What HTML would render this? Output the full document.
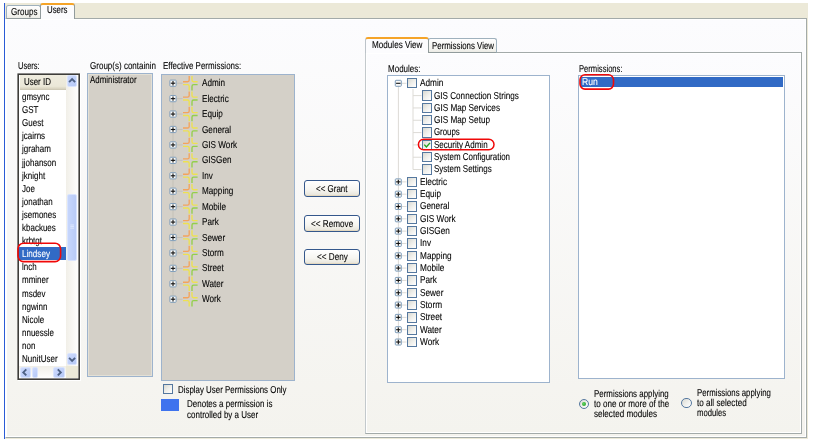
<!DOCTYPE html>
<html><head><meta charset="utf-8"><title>Users</title>
<style>
html,body{margin:0;padding:0;background:#fff;}
body{width:814px;height:440px;overflow:hidden;position:relative;font-family:"Liberation Sans",sans-serif;font-size:10px;line-height:12px;color:#000;}
.a{position:absolute;box-sizing:border-box;}
.t{-webkit-text-stroke:0.1px currentColor;position:absolute;white-space:nowrap;transform-origin:0 0;display:block;line-height:12px;}
#tx{position:absolute;left:0;top:0;width:814px;height:440px;will-change:transform;}
.pane{border:1.3px solid #a3aaa9;border-left-color:#fff;background:linear-gradient(#fcfcfe 0,#f4f3ee 100%);box-shadow:inset 0 0 0 1px #fff;}
.tab{border:1px solid #9fb1bd;border-bottom-color:#919b9c;border-radius:2.5px 2.5px 0 0;background:linear-gradient(#fefefe,#f3f3ee 80%,#ecebe5);}
.tabsel{border:1px solid #919b9c;border-top:2.2px solid #f5a428;border-bottom:none;border-radius:3px 3px 0 0;background:#fcfcfe;}
.lb{border:1.4px solid #9db3cd;}
.sbtn{border:1px solid #d9e4fe;border-radius:2px;background:linear-gradient(135deg,#cddafd,#b5c8f6);}
.cb{border:1px solid #55789f;background:linear-gradient(135deg,#d9d9d2 0,#efefeb 50%,#fff 100%);}
.rd{border:1px solid #55789f;border-radius:50%;background:linear-gradient(135deg,#d9d9d2 0,#efefeb 50%,#fff 100%);}
.btn{border:1.4px solid #35588c;border-radius:3px;background:linear-gradient(#fff 0,#f6f5f0 60%,#e6e3d8 100%);box-shadow:inset 0 -1px 0 #e3d8c0;}
svg{position:absolute;left:0;top:0;}
</style></head>
<body>
<div class="a" style="left:4.00px;top:3.00px;width:1.20px;height:435.60px;background:#2a5bd6;"></div>
<div class="a" style="left:5.20px;top:3.00px;width:802.80px;height:436.00px;background:#ece9d8;"></div>
<div class="a pane" style="left:5.20px;top:18.20px;width:802.20px;height:419.50px;"></div>
<div class="a tab" style="left:6.30px;top:4.80px;width:34.70px;height:13.80px;"></div>
<div class="a tabsel" style="left:40.40px;top:3.00px;width:34.80px;height:16.40px;"></div>
<div class="a" style="left:18.00px;top:74.00px;width:63.00px;height:307.00px;background:#fff;"></div>
<div class="a" style="left:19.60px;top:75.00px;width:46.00px;height:14.60px;background:linear-gradient(#efecdf 0,#ebe8d8 75%,#d8d3c0 92%,#c8c4b0 100%);"></div>
<div class="a" style="left:65.80px;top:75.00px;width:12.20px;height:291.40px;background:linear-gradient(90deg,#f1efe8,#fefefd);"></div>
<div class="a sbtn" style="left:66.90px;top:75.20px;width:10.30px;height:11.40px;"></div>
<div class="a sbtn" style="left:67.00px;top:193.60px;width:10.30px;height:67.00px;background:linear-gradient(90deg,#c6d6fc,#b9cbf6);"></div>
<div class="a sbtn" style="left:66.80px;top:353.40px;width:10.60px;height:11.40px;"></div>
<div class="a" style="left:19.30px;top:366.40px;width:46.30px;height:11.80px;background:linear-gradient(#f1efe8,#fefefd);"></div>
<div class="a sbtn" style="left:19.60px;top:366.80px;width:11.00px;height:11.00px;"></div>
<div class="a sbtn" style="left:32.40px;top:366.80px;width:5.20px;height:11.00px;"></div>
<div class="a sbtn" style="left:53.40px;top:366.80px;width:11.40px;height:11.00px;"></div>
<div class="a" style="left:65.60px;top:366.40px;width:12.40px;height:11.80px;background:#ece9d8;"></div>
<div class="a" style="left:19.30px;top:247.00px;width:46.30px;height:13.00px;background:#316ac5;"></div>
<div class="a lb" style="left:86.80px;top:73.40px;width:66.40px;height:303.80px;background:#d4d0c8;box-shadow:inset 0 0 0 1px #e3e0d6;"></div>
<div class="a lb" style="left:160.80px;top:73.80px;width:134.40px;height:307.20px;background:#d4d0c8;"></div>
<div class="a cb" style="left:163.00px;top:384.00px;width:10.40px;height:10.40px;"></div>
<div class="a" style="left:161.00px;top:399.00px;width:18.30px;height:12.00px;background:#3f73ee;"></div>
<div class="a btn" style="left:304.00px;top:180.00px;width:56.10px;height:16.60px;"></div>
<div class="a btn" style="left:304.00px;top:215.40px;width:56.10px;height:16.20px;"></div>
<div class="a btn" style="left:304.00px;top:248.60px;width:56.10px;height:16.20px;"></div>
<div class="a pane" style="left:365.30px;top:51.80px;width:436.30px;height:382.70px;border-left:1.6px solid #c3c9cc;"></div>
<div class="a tab" style="left:428.20px;top:38.40px;width:69.00px;height:14.20px;"></div>
<div class="a tabsel" style="left:365.30px;top:36.60px;width:63.50px;height:16.80px;border-left:1.5px solid #bcc3c9;"></div>
<div class="a lb" style="left:386.80px;top:75.20px;width:163.00px;height:308.20px;background:#fff;"></div>
<div class="a cb" style="left:407.00px;top:78.10px;width:10.40px;height:10.40px;"></div>
<div class="a cb" style="left:422.00px;top:90.42px;width:10.40px;height:10.40px;"></div>
<div class="a cb" style="left:422.00px;top:102.74px;width:10.40px;height:10.40px;"></div>
<div class="a cb" style="left:422.00px;top:115.06px;width:10.40px;height:10.40px;"></div>
<div class="a cb" style="left:422.00px;top:127.38px;width:10.40px;height:10.40px;"></div>
<div class="a cb" style="left:422.00px;top:139.70px;width:10.40px;height:10.40px;"></div>
<div class="a cb" style="left:422.00px;top:152.02px;width:10.40px;height:10.40px;"></div>
<div class="a cb" style="left:422.00px;top:164.34px;width:10.40px;height:10.40px;"></div>
<div class="a cb" style="left:407.00px;top:176.66px;width:10.40px;height:10.40px;"></div>
<div class="a cb" style="left:407.00px;top:188.98px;width:10.40px;height:10.40px;"></div>
<div class="a cb" style="left:407.00px;top:201.30px;width:10.40px;height:10.40px;"></div>
<div class="a cb" style="left:407.00px;top:213.62px;width:10.40px;height:10.40px;"></div>
<div class="a cb" style="left:407.00px;top:225.94px;width:10.40px;height:10.40px;"></div>
<div class="a cb" style="left:407.00px;top:238.26px;width:10.40px;height:10.40px;"></div>
<div class="a cb" style="left:407.00px;top:250.58px;width:10.40px;height:10.40px;"></div>
<div class="a cb" style="left:407.00px;top:262.90px;width:10.40px;height:10.40px;"></div>
<div class="a cb" style="left:407.00px;top:275.22px;width:10.40px;height:10.40px;"></div>
<div class="a cb" style="left:407.00px;top:287.54px;width:10.40px;height:10.40px;"></div>
<div class="a cb" style="left:407.00px;top:299.86px;width:10.40px;height:10.40px;"></div>
<div class="a cb" style="left:407.00px;top:312.18px;width:10.40px;height:10.40px;"></div>
<div class="a cb" style="left:407.00px;top:324.50px;width:10.40px;height:10.40px;"></div>
<div class="a cb" style="left:407.00px;top:336.82px;width:10.40px;height:10.40px;"></div>
<div class="a lb" style="left:578.40px;top:75.20px;width:206.80px;height:303.40px;background:#fff;"></div>
<div class="a" style="left:580.40px;top:77.00px;width:202.80px;height:9.80px;background:#316ac5;"></div>
<div class="a rd" style="left:578.60px;top:398.80px;width:10.40px;height:10.40px;"></div>
<div class="a" style="left:581.70px;top:401.90px;width:4.20px;height:4.20px;border-radius:50%;background:radial-gradient(circle at 40% 40%,#5fd25f,#1f9a1f);"></div>
<div class="a rd" style="left:681.20px;top:397.80px;width:10.40px;height:10.40px;"></div>
<div id="tx">
<span class="t" style="left:11.00px;top:6.10px;transform:scaleX(0.8079) skewX(.05deg);">Groups</span>
<span class="t" style="left:46.50px;top:4.30px;transform:scaleX(0.7854) skewX(.05deg);">Users</span>
<span class="t" style="left:18.30px;top:59.50px;transform:scaleX(0.7509) skewX(.05deg);">Users:</span>
<span class="t" style="left:24.10px;top:75.90px;transform:scaleX(0.7935) skewX(.05deg);">User ID</span>
<span class="t" style="left:22.00px;top:91.00px;transform:scaleX(0.8000) skewX(.05deg);">gmsync</span>
<span class="t" style="left:22.00px;top:104.10px;transform:scaleX(0.8000) skewX(.05deg);">GST</span>
<span class="t" style="left:22.00px;top:117.20px;transform:scaleX(0.8000) skewX(.05deg);">Guest</span>
<span class="t" style="left:22.20px;top:130.30px;transform:scaleX(0.8000) skewX(.05deg);">jcairns</span>
<span class="t" style="left:22.20px;top:143.40px;transform:scaleX(0.8000) skewX(.05deg);">jgraham</span>
<span class="t" style="left:22.20px;top:156.50px;transform:scaleX(0.8000) skewX(.05deg);">jjohanson</span>
<span class="t" style="left:22.20px;top:169.60px;transform:scaleX(0.8000) skewX(.05deg);">jknight</span>
<span class="t" style="left:22.00px;top:182.70px;transform:scaleX(0.8000) skewX(.05deg);">Joe</span>
<span class="t" style="left:22.20px;top:195.80px;transform:scaleX(0.8000) skewX(.05deg);">jonathan</span>
<span class="t" style="left:22.20px;top:208.90px;transform:scaleX(0.8000) skewX(.05deg);">jsemones</span>
<span class="t" style="left:22.00px;top:222.00px;transform:scaleX(0.8000) skewX(.05deg);">kbackues</span>
<span class="t" style="left:22.00px;top:235.10px;transform:scaleX(0.8000) skewX(.05deg);">krbtgt</span>
<span class="t" style="left:22.00px;top:248.20px;transform:scaleX(0.8128) skewX(.05deg);color:#fff;">Lindsey</span>
<span class="t" style="left:22.00px;top:261.30px;transform:scaleX(0.8000) skewX(.05deg);">lnch</span>
<span class="t" style="left:22.00px;top:274.40px;transform:scaleX(0.8000) skewX(.05deg);">mminer</span>
<span class="t" style="left:22.00px;top:287.50px;transform:scaleX(0.8000) skewX(.05deg);">msdev</span>
<span class="t" style="left:22.00px;top:300.60px;transform:scaleX(0.8000) skewX(.05deg);">ngwinn</span>
<span class="t" style="left:22.00px;top:313.70px;transform:scaleX(0.8000) skewX(.05deg);">Nicole</span>
<span class="t" style="left:22.00px;top:326.80px;transform:scaleX(0.8000) skewX(.05deg);">nnuessle</span>
<span class="t" style="left:22.00px;top:339.90px;transform:scaleX(0.8000) skewX(.05deg);">non</span>
<span class="t" style="left:22.00px;top:353.00px;transform:scaleX(0.8000) skewX(.05deg);">NunitUser</span>
<span class="t" style="left:89.50px;top:59.50px;transform:scaleX(0.8024) skewX(.05deg);">Group(s) containin</span>
<span class="t" style="left:90.00px;top:74.10px;transform:scaleX(0.7895) skewX(.05deg);">Administrator</span>
<span class="t" style="left:163.40px;top:59.50px;transform:scaleX(0.7963) skewX(.05deg);">Effective Permissions:</span>
<span class="t" style="left:201.70px;top:77.30px;transform:scaleX(0.8150) skewX(.05deg);">Admin</span>
<span class="t" style="left:201.70px;top:92.73px;transform:scaleX(0.8150) skewX(.05deg);">Electric</span>
<span class="t" style="left:201.70px;top:108.16px;transform:scaleX(0.8150) skewX(.05deg);">Equip</span>
<span class="t" style="left:201.70px;top:123.59px;transform:scaleX(0.8150) skewX(.05deg);">General</span>
<span class="t" style="left:201.70px;top:139.02px;transform:scaleX(0.8150) skewX(.05deg);">GIS Work</span>
<span class="t" style="left:201.70px;top:154.45px;transform:scaleX(0.8150) skewX(.05deg);">GISGen</span>
<span class="t" style="left:201.70px;top:169.88px;transform:scaleX(0.8150) skewX(.05deg);">Inv</span>
<span class="t" style="left:201.70px;top:185.31px;transform:scaleX(0.8150) skewX(.05deg);">Mapping</span>
<span class="t" style="left:201.70px;top:200.74px;transform:scaleX(0.8150) skewX(.05deg);">Mobile</span>
<span class="t" style="left:201.70px;top:216.17px;transform:scaleX(0.8150) skewX(.05deg);">Park</span>
<span class="t" style="left:201.70px;top:231.60px;transform:scaleX(0.8150) skewX(.05deg);">Sewer</span>
<span class="t" style="left:201.70px;top:247.03px;transform:scaleX(0.8150) skewX(.05deg);">Storm</span>
<span class="t" style="left:201.70px;top:262.46px;transform:scaleX(0.8150) skewX(.05deg);">Street</span>
<span class="t" style="left:201.70px;top:277.89px;transform:scaleX(0.8150) skewX(.05deg);">Water</span>
<span class="t" style="left:201.70px;top:293.32px;transform:scaleX(0.8150) skewX(.05deg);">Work</span>
<span class="t" style="left:178.00px;top:383.90px;transform:scaleX(0.7905) skewX(.05deg);">Display User Permissions Only</span>
<span class="t" style="left:187.00px;top:398.00px;transform:scaleX(0.8000) skewX(.05deg);">Denotes a permission is</span>
<span class="t" style="left:187.00px;top:408.50px;transform:scaleX(0.8000) skewX(.05deg);">controlled by a User</span>
<span class="t" style="left:316.00px;top:183.00px;transform:scaleX(0.7985) skewX(.05deg);">&lt;&lt; Grant</span>
<span class="t" style="left:310.50px;top:218.00px;transform:scaleX(0.8162) skewX(.05deg);">&lt;&lt; Remove</span>
<span class="t" style="left:316.70px;top:251.20px;transform:scaleX(0.8148) skewX(.05deg);">&lt;&lt; Deny</span>
<span class="t" style="left:372.00px;top:38.80px;transform:scaleX(0.8132) skewX(.05deg);">Modules View</span>
<span class="t" style="left:432.00px;top:40.30px;transform:scaleX(0.7873) skewX(.05deg);">Permissions View</span>
<span class="t" style="left:387.50px;top:62.60px;transform:scaleX(0.8005) skewX(.05deg);">Modules:</span>
<span class="t" style="left:420.00px;top:77.20px;transform:scaleX(0.8250) skewX(.05deg);">Admin</span>
<span class="t" style="left:434.40px;top:89.52px;transform:scaleX(0.8115) skewX(.05deg);">GIS Connection Strings</span>
<span class="t" style="left:434.40px;top:101.84px;transform:scaleX(0.8189) skewX(.05deg);">GIS Map Services</span>
<span class="t" style="left:434.40px;top:114.16px;transform:scaleX(0.8193) skewX(.05deg);">GIS Map Setup</span>
<span class="t" style="left:434.40px;top:126.48px;transform:scaleX(0.7866) skewX(.05deg);">Groups</span>
<span class="t" style="left:434.40px;top:138.80px;transform:scaleX(0.8036) skewX(.05deg);">Security Admin</span>
<span class="t" style="left:434.40px;top:151.12px;transform:scaleX(0.7950) skewX(.05deg);">System Configuration</span>
<span class="t" style="left:434.40px;top:163.44px;transform:scaleX(0.7986) skewX(.05deg);">System Settings</span>
<span class="t" style="left:420.00px;top:175.76px;transform:scaleX(0.8250) skewX(.05deg);">Electric</span>
<span class="t" style="left:420.00px;top:188.08px;transform:scaleX(0.8250) skewX(.05deg);">Equip</span>
<span class="t" style="left:420.00px;top:200.40px;transform:scaleX(0.8250) skewX(.05deg);">General</span>
<span class="t" style="left:420.00px;top:212.72px;transform:scaleX(0.8250) skewX(.05deg);">GIS Work</span>
<span class="t" style="left:420.00px;top:225.04px;transform:scaleX(0.8250) skewX(.05deg);">GISGen</span>
<span class="t" style="left:420.00px;top:237.36px;transform:scaleX(0.8250) skewX(.05deg);">Inv</span>
<span class="t" style="left:420.00px;top:249.68px;transform:scaleX(0.8250) skewX(.05deg);">Mapping</span>
<span class="t" style="left:420.00px;top:262.00px;transform:scaleX(0.8250) skewX(.05deg);">Mobile</span>
<span class="t" style="left:420.00px;top:274.32px;transform:scaleX(0.8250) skewX(.05deg);">Park</span>
<span class="t" style="left:420.00px;top:286.64px;transform:scaleX(0.8250) skewX(.05deg);">Sewer</span>
<span class="t" style="left:420.00px;top:298.96px;transform:scaleX(0.8250) skewX(.05deg);">Storm</span>
<span class="t" style="left:420.00px;top:311.28px;transform:scaleX(0.8250) skewX(.05deg);">Street</span>
<span class="t" style="left:420.00px;top:323.60px;transform:scaleX(0.8250) skewX(.05deg);">Water</span>
<span class="t" style="left:420.00px;top:335.92px;transform:scaleX(0.8250) skewX(.05deg);">Work</span>
<span class="t" style="left:579.00px;top:62.60px;transform:scaleX(0.7598) skewX(.05deg);">Permissions:</span>
<span class="t" style="left:581.80px;top:76.00px;transform:scaleX(0.8610) skewX(.05deg);color:#fff;">Run</span>
<span class="t" style="left:593.60px;top:387.80px;transform:scaleX(0.7905) skewX(.05deg);">Permissions applying</span>
<span class="t" style="left:593.60px;top:397.90px;transform:scaleX(0.8110) skewX(.05deg);">to one or more of the</span>
<span class="t" style="left:593.60px;top:407.90px;transform:scaleX(0.8098) skewX(.05deg);">selected modules</span>
<span class="t" style="left:696.90px;top:387.10px;transform:scaleX(0.7820) skewX(.05deg);">Permissions applying</span>
<span class="t" style="left:696.90px;top:397.10px;transform:scaleX(0.8128) skewX(.05deg);">to all selected</span>
<span class="t" style="left:696.90px;top:407.10px;transform:scaleX(0.7698) skewX(.05deg);">modules</span>
</div>
<svg width="814" height="440" viewBox="0 0 814 440">
<rect x="18.2" y="74.2" width="61" height="305" fill="none" stroke="#3e3d3a" stroke-width="1.6"/>
<polyline points="69.10,82.10 72.10,79.10 75.10,82.10" fill="none" stroke="#4d6185" stroke-width="1.9"/>
<polyline points="69.10,357.90 72.10,360.90 75.10,357.90" fill="none" stroke="#4d6185" stroke-width="1.9"/>
<polyline points="26.30,369.40 23.30,372.40 26.30,375.40" fill="none" stroke="#4d6185" stroke-width="1.9"/>
<polyline points="57.80,369.40 60.80,372.40 57.80,375.40" fill="none" stroke="#4d6185" stroke-width="1.9"/>
<line x1="70.3" x2="74" y1="225.0" y2="225.0" stroke="#e4ecfd" stroke-width="0.8"/>
<line x1="70.3" x2="74" y1="226.6" y2="226.6" stroke="#e4ecfd" stroke-width="0.8"/>
<line x1="70.3" x2="74" y1="228.2" y2="228.2" stroke="#e4ecfd" stroke-width="0.8"/>
<rect x="18" y="243.2" width="42.6" height="18.4" rx="5.5" ry="5.5" fill="none" stroke="#f00808" stroke-width="1.6"/>
<line x1="173" x2="173" y1="83.20" y2="299.22" stroke="#c3bfb5" stroke-width="0.9"/>
<line x1="177" x2="182.5" y1="83.20" y2="83.20" stroke="#c3bfb5" stroke-width="0.9"/>
<rect x="169.90" y="80.10" width="6.20" height="6.20" rx="0.7" fill="#fbfbf9" stroke="#7f9db9" stroke-width="1"/>
<line x1="170.80" x2="175.20" y1="83.20" y2="83.20" stroke="#111" stroke-width="1.1"/>
<line y1="81.00" y2="85.40" x1="173.00" x2="173.00" stroke="#111" stroke-width="1.1"/>
<path d="M183 81.70 H187.6 Q189.2 81.70 189.2 80.10 V76.00" fill="none" stroke="#f4a35c" stroke-width="1.35"/>
<path d="M197.6 81.70 H193.6 Q192 81.70 192 80.10 V76.00" fill="none" stroke="#ede150" stroke-width="1.35"/>
<path d="M183 84.60 H187.6 Q189.2 84.60 189.2 86.20 V90.40" fill="none" stroke="#ede150" stroke-width="1.35"/>
<path d="M197.6 84.60 H193.6 Q192 84.60 192 86.20 V90.40" fill="none" stroke="#93cf4b" stroke-width="1.35"/>
<line x1="177" x2="182.5" y1="98.63" y2="98.63" stroke="#c3bfb5" stroke-width="0.9"/>
<rect x="169.90" y="95.53" width="6.20" height="6.20" rx="0.7" fill="#fbfbf9" stroke="#7f9db9" stroke-width="1"/>
<line x1="170.80" x2="175.20" y1="98.63" y2="98.63" stroke="#111" stroke-width="1.1"/>
<line y1="96.43" y2="100.83" x1="173.00" x2="173.00" stroke="#111" stroke-width="1.1"/>
<path d="M183 97.13 H187.6 Q189.2 97.13 189.2 95.53 V91.43" fill="none" stroke="#f4a35c" stroke-width="1.35"/>
<path d="M197.6 97.13 H193.6 Q192 97.13 192 95.53 V91.43" fill="none" stroke="#ede150" stroke-width="1.35"/>
<path d="M183 100.03 H187.6 Q189.2 100.03 189.2 101.63 V105.83" fill="none" stroke="#ede150" stroke-width="1.35"/>
<path d="M197.6 100.03 H193.6 Q192 100.03 192 101.63 V105.83" fill="none" stroke="#93cf4b" stroke-width="1.35"/>
<line x1="177" x2="182.5" y1="114.06" y2="114.06" stroke="#c3bfb5" stroke-width="0.9"/>
<rect x="169.90" y="110.96" width="6.20" height="6.20" rx="0.7" fill="#fbfbf9" stroke="#7f9db9" stroke-width="1"/>
<line x1="170.80" x2="175.20" y1="114.06" y2="114.06" stroke="#111" stroke-width="1.1"/>
<line y1="111.86" y2="116.26" x1="173.00" x2="173.00" stroke="#111" stroke-width="1.1"/>
<path d="M183 112.56 H187.6 Q189.2 112.56 189.2 110.96 V106.86" fill="none" stroke="#f4a35c" stroke-width="1.35"/>
<path d="M197.6 112.56 H193.6 Q192 112.56 192 110.96 V106.86" fill="none" stroke="#ede150" stroke-width="1.35"/>
<path d="M183 115.46 H187.6 Q189.2 115.46 189.2 117.06 V121.26" fill="none" stroke="#ede150" stroke-width="1.35"/>
<path d="M197.6 115.46 H193.6 Q192 115.46 192 117.06 V121.26" fill="none" stroke="#93cf4b" stroke-width="1.35"/>
<line x1="177" x2="182.5" y1="129.49" y2="129.49" stroke="#c3bfb5" stroke-width="0.9"/>
<rect x="169.90" y="126.39" width="6.20" height="6.20" rx="0.7" fill="#fbfbf9" stroke="#7f9db9" stroke-width="1"/>
<line x1="170.80" x2="175.20" y1="129.49" y2="129.49" stroke="#111" stroke-width="1.1"/>
<line y1="127.29" y2="131.69" x1="173.00" x2="173.00" stroke="#111" stroke-width="1.1"/>
<path d="M183 127.99 H187.6 Q189.2 127.99 189.2 126.39 V122.29" fill="none" stroke="#f4a35c" stroke-width="1.35"/>
<path d="M197.6 127.99 H193.6 Q192 127.99 192 126.39 V122.29" fill="none" stroke="#ede150" stroke-width="1.35"/>
<path d="M183 130.89 H187.6 Q189.2 130.89 189.2 132.49 V136.69" fill="none" stroke="#ede150" stroke-width="1.35"/>
<path d="M197.6 130.89 H193.6 Q192 130.89 192 132.49 V136.69" fill="none" stroke="#93cf4b" stroke-width="1.35"/>
<line x1="177" x2="182.5" y1="144.92" y2="144.92" stroke="#c3bfb5" stroke-width="0.9"/>
<rect x="169.90" y="141.82" width="6.20" height="6.20" rx="0.7" fill="#fbfbf9" stroke="#7f9db9" stroke-width="1"/>
<line x1="170.80" x2="175.20" y1="144.92" y2="144.92" stroke="#111" stroke-width="1.1"/>
<line y1="142.72" y2="147.12" x1="173.00" x2="173.00" stroke="#111" stroke-width="1.1"/>
<path d="M183 143.42 H187.6 Q189.2 143.42 189.2 141.82 V137.72" fill="none" stroke="#f4a35c" stroke-width="1.35"/>
<path d="M197.6 143.42 H193.6 Q192 143.42 192 141.82 V137.72" fill="none" stroke="#ede150" stroke-width="1.35"/>
<path d="M183 146.32 H187.6 Q189.2 146.32 189.2 147.92 V152.12" fill="none" stroke="#ede150" stroke-width="1.35"/>
<path d="M197.6 146.32 H193.6 Q192 146.32 192 147.92 V152.12" fill="none" stroke="#93cf4b" stroke-width="1.35"/>
<line x1="177" x2="182.5" y1="160.35" y2="160.35" stroke="#c3bfb5" stroke-width="0.9"/>
<rect x="169.90" y="157.25" width="6.20" height="6.20" rx="0.7" fill="#fbfbf9" stroke="#7f9db9" stroke-width="1"/>
<line x1="170.80" x2="175.20" y1="160.35" y2="160.35" stroke="#111" stroke-width="1.1"/>
<line y1="158.15" y2="162.55" x1="173.00" x2="173.00" stroke="#111" stroke-width="1.1"/>
<path d="M183 158.85 H187.6 Q189.2 158.85 189.2 157.25 V153.15" fill="none" stroke="#f4a35c" stroke-width="1.35"/>
<path d="M197.6 158.85 H193.6 Q192 158.85 192 157.25 V153.15" fill="none" stroke="#ede150" stroke-width="1.35"/>
<path d="M183 161.75 H187.6 Q189.2 161.75 189.2 163.35 V167.55" fill="none" stroke="#ede150" stroke-width="1.35"/>
<path d="M197.6 161.75 H193.6 Q192 161.75 192 163.35 V167.55" fill="none" stroke="#93cf4b" stroke-width="1.35"/>
<line x1="177" x2="182.5" y1="175.78" y2="175.78" stroke="#c3bfb5" stroke-width="0.9"/>
<rect x="169.90" y="172.68" width="6.20" height="6.20" rx="0.7" fill="#fbfbf9" stroke="#7f9db9" stroke-width="1"/>
<line x1="170.80" x2="175.20" y1="175.78" y2="175.78" stroke="#111" stroke-width="1.1"/>
<line y1="173.58" y2="177.98" x1="173.00" x2="173.00" stroke="#111" stroke-width="1.1"/>
<path d="M183 174.28 H187.6 Q189.2 174.28 189.2 172.68 V168.58" fill="none" stroke="#f4a35c" stroke-width="1.35"/>
<path d="M197.6 174.28 H193.6 Q192 174.28 192 172.68 V168.58" fill="none" stroke="#ede150" stroke-width="1.35"/>
<path d="M183 177.18 H187.6 Q189.2 177.18 189.2 178.78 V182.98" fill="none" stroke="#ede150" stroke-width="1.35"/>
<path d="M197.6 177.18 H193.6 Q192 177.18 192 178.78 V182.98" fill="none" stroke="#93cf4b" stroke-width="1.35"/>
<line x1="177" x2="182.5" y1="191.21" y2="191.21" stroke="#c3bfb5" stroke-width="0.9"/>
<rect x="169.90" y="188.11" width="6.20" height="6.20" rx="0.7" fill="#fbfbf9" stroke="#7f9db9" stroke-width="1"/>
<line x1="170.80" x2="175.20" y1="191.21" y2="191.21" stroke="#111" stroke-width="1.1"/>
<line y1="189.01" y2="193.41" x1="173.00" x2="173.00" stroke="#111" stroke-width="1.1"/>
<path d="M183 189.71 H187.6 Q189.2 189.71 189.2 188.11 V184.01" fill="none" stroke="#f4a35c" stroke-width="1.35"/>
<path d="M197.6 189.71 H193.6 Q192 189.71 192 188.11 V184.01" fill="none" stroke="#ede150" stroke-width="1.35"/>
<path d="M183 192.61 H187.6 Q189.2 192.61 189.2 194.21 V198.41" fill="none" stroke="#ede150" stroke-width="1.35"/>
<path d="M197.6 192.61 H193.6 Q192 192.61 192 194.21 V198.41" fill="none" stroke="#93cf4b" stroke-width="1.35"/>
<line x1="177" x2="182.5" y1="206.64" y2="206.64" stroke="#c3bfb5" stroke-width="0.9"/>
<rect x="169.90" y="203.54" width="6.20" height="6.20" rx="0.7" fill="#fbfbf9" stroke="#7f9db9" stroke-width="1"/>
<line x1="170.80" x2="175.20" y1="206.64" y2="206.64" stroke="#111" stroke-width="1.1"/>
<line y1="204.44" y2="208.84" x1="173.00" x2="173.00" stroke="#111" stroke-width="1.1"/>
<path d="M183 205.14 H187.6 Q189.2 205.14 189.2 203.54 V199.44" fill="none" stroke="#f4a35c" stroke-width="1.35"/>
<path d="M197.6 205.14 H193.6 Q192 205.14 192 203.54 V199.44" fill="none" stroke="#ede150" stroke-width="1.35"/>
<path d="M183 208.04 H187.6 Q189.2 208.04 189.2 209.64 V213.84" fill="none" stroke="#ede150" stroke-width="1.35"/>
<path d="M197.6 208.04 H193.6 Q192 208.04 192 209.64 V213.84" fill="none" stroke="#93cf4b" stroke-width="1.35"/>
<line x1="177" x2="182.5" y1="222.07" y2="222.07" stroke="#c3bfb5" stroke-width="0.9"/>
<rect x="169.90" y="218.97" width="6.20" height="6.20" rx="0.7" fill="#fbfbf9" stroke="#7f9db9" stroke-width="1"/>
<line x1="170.80" x2="175.20" y1="222.07" y2="222.07" stroke="#111" stroke-width="1.1"/>
<line y1="219.87" y2="224.27" x1="173.00" x2="173.00" stroke="#111" stroke-width="1.1"/>
<path d="M183 220.57 H187.6 Q189.2 220.57 189.2 218.97 V214.87" fill="none" stroke="#f4a35c" stroke-width="1.35"/>
<path d="M197.6 220.57 H193.6 Q192 220.57 192 218.97 V214.87" fill="none" stroke="#ede150" stroke-width="1.35"/>
<path d="M183 223.47 H187.6 Q189.2 223.47 189.2 225.07 V229.27" fill="none" stroke="#ede150" stroke-width="1.35"/>
<path d="M197.6 223.47 H193.6 Q192 223.47 192 225.07 V229.27" fill="none" stroke="#93cf4b" stroke-width="1.35"/>
<line x1="177" x2="182.5" y1="237.50" y2="237.50" stroke="#c3bfb5" stroke-width="0.9"/>
<rect x="169.90" y="234.40" width="6.20" height="6.20" rx="0.7" fill="#fbfbf9" stroke="#7f9db9" stroke-width="1"/>
<line x1="170.80" x2="175.20" y1="237.50" y2="237.50" stroke="#111" stroke-width="1.1"/>
<line y1="235.30" y2="239.70" x1="173.00" x2="173.00" stroke="#111" stroke-width="1.1"/>
<path d="M183 236.00 H187.6 Q189.2 236.00 189.2 234.40 V230.30" fill="none" stroke="#f4a35c" stroke-width="1.35"/>
<path d="M197.6 236.00 H193.6 Q192 236.00 192 234.40 V230.30" fill="none" stroke="#ede150" stroke-width="1.35"/>
<path d="M183 238.90 H187.6 Q189.2 238.90 189.2 240.50 V244.70" fill="none" stroke="#ede150" stroke-width="1.35"/>
<path d="M197.6 238.90 H193.6 Q192 238.90 192 240.50 V244.70" fill="none" stroke="#93cf4b" stroke-width="1.35"/>
<line x1="177" x2="182.5" y1="252.93" y2="252.93" stroke="#c3bfb5" stroke-width="0.9"/>
<rect x="169.90" y="249.83" width="6.20" height="6.20" rx="0.7" fill="#fbfbf9" stroke="#7f9db9" stroke-width="1"/>
<line x1="170.80" x2="175.20" y1="252.93" y2="252.93" stroke="#111" stroke-width="1.1"/>
<line y1="250.73" y2="255.13" x1="173.00" x2="173.00" stroke="#111" stroke-width="1.1"/>
<path d="M183 251.43 H187.6 Q189.2 251.43 189.2 249.83 V245.73" fill="none" stroke="#f4a35c" stroke-width="1.35"/>
<path d="M197.6 251.43 H193.6 Q192 251.43 192 249.83 V245.73" fill="none" stroke="#ede150" stroke-width="1.35"/>
<path d="M183 254.33 H187.6 Q189.2 254.33 189.2 255.93 V260.13" fill="none" stroke="#ede150" stroke-width="1.35"/>
<path d="M197.6 254.33 H193.6 Q192 254.33 192 255.93 V260.13" fill="none" stroke="#93cf4b" stroke-width="1.35"/>
<line x1="177" x2="182.5" y1="268.36" y2="268.36" stroke="#c3bfb5" stroke-width="0.9"/>
<rect x="169.90" y="265.26" width="6.20" height="6.20" rx="0.7" fill="#fbfbf9" stroke="#7f9db9" stroke-width="1"/>
<line x1="170.80" x2="175.20" y1="268.36" y2="268.36" stroke="#111" stroke-width="1.1"/>
<line y1="266.16" y2="270.56" x1="173.00" x2="173.00" stroke="#111" stroke-width="1.1"/>
<path d="M183 266.86 H187.6 Q189.2 266.86 189.2 265.26 V261.16" fill="none" stroke="#f4a35c" stroke-width="1.35"/>
<path d="M197.6 266.86 H193.6 Q192 266.86 192 265.26 V261.16" fill="none" stroke="#ede150" stroke-width="1.35"/>
<path d="M183 269.76 H187.6 Q189.2 269.76 189.2 271.36 V275.56" fill="none" stroke="#ede150" stroke-width="1.35"/>
<path d="M197.6 269.76 H193.6 Q192 269.76 192 271.36 V275.56" fill="none" stroke="#93cf4b" stroke-width="1.35"/>
<line x1="177" x2="182.5" y1="283.79" y2="283.79" stroke="#c3bfb5" stroke-width="0.9"/>
<rect x="169.90" y="280.69" width="6.20" height="6.20" rx="0.7" fill="#fbfbf9" stroke="#7f9db9" stroke-width="1"/>
<line x1="170.80" x2="175.20" y1="283.79" y2="283.79" stroke="#111" stroke-width="1.1"/>
<line y1="281.59" y2="285.99" x1="173.00" x2="173.00" stroke="#111" stroke-width="1.1"/>
<path d="M183 282.29 H187.6 Q189.2 282.29 189.2 280.69 V276.59" fill="none" stroke="#f4a35c" stroke-width="1.35"/>
<path d="M197.6 282.29 H193.6 Q192 282.29 192 280.69 V276.59" fill="none" stroke="#ede150" stroke-width="1.35"/>
<path d="M183 285.19 H187.6 Q189.2 285.19 189.2 286.79 V290.99" fill="none" stroke="#ede150" stroke-width="1.35"/>
<path d="M197.6 285.19 H193.6 Q192 285.19 192 286.79 V290.99" fill="none" stroke="#93cf4b" stroke-width="1.35"/>
<line x1="177" x2="182.5" y1="299.22" y2="299.22" stroke="#c3bfb5" stroke-width="0.9"/>
<rect x="169.90" y="296.12" width="6.20" height="6.20" rx="0.7" fill="#fbfbf9" stroke="#7f9db9" stroke-width="1"/>
<line x1="170.80" x2="175.20" y1="299.22" y2="299.22" stroke="#111" stroke-width="1.1"/>
<line y1="297.02" y2="301.42" x1="173.00" x2="173.00" stroke="#111" stroke-width="1.1"/>
<path d="M183 297.72 H187.6 Q189.2 297.72 189.2 296.12 V292.02" fill="none" stroke="#f4a35c" stroke-width="1.35"/>
<path d="M197.6 297.72 H193.6 Q192 297.72 192 296.12 V292.02" fill="none" stroke="#ede150" stroke-width="1.35"/>
<path d="M183 300.62 H187.6 Q189.2 300.62 189.2 302.22 V306.42" fill="none" stroke="#ede150" stroke-width="1.35"/>
<path d="M197.6 300.62 H193.6 Q192 300.62 192 302.22 V306.42" fill="none" stroke="#93cf4b" stroke-width="1.35"/>
<line x1="398.4" x2="398.4" y1="83.30" y2="342.02" stroke="#dddbd6" stroke-width="1"/>
<line x1="413" x2="413" y1="89.00" y2="169.54" stroke="#dddbd6" stroke-width="1"/>
<line x1="402" x2="406.5" y1="83.30" y2="83.30" stroke="#dddbd6" stroke-width="1"/>
<rect x="395.30" y="80.30" width="6.00" height="6.00" rx="0.7" fill="#fbfbf9" stroke="#7f9db9" stroke-width="1"/>
<line x1="396.10" x2="400.50" y1="83.30" y2="83.30" stroke="#111" stroke-width="1.1"/>
<line x1="413" x2="421.5" y1="95.62" y2="95.62" stroke="#dddbd6" stroke-width="1"/>
<line x1="413" x2="421.5" y1="107.94" y2="107.94" stroke="#dddbd6" stroke-width="1"/>
<line x1="413" x2="421.5" y1="120.26" y2="120.26" stroke="#dddbd6" stroke-width="1"/>
<line x1="413" x2="421.5" y1="132.58" y2="132.58" stroke="#dddbd6" stroke-width="1"/>
<line x1="413" x2="421.5" y1="144.90" y2="144.90" stroke="#dddbd6" stroke-width="1"/>
<polyline points="424.30,144.60 426.40,147.00 430.00,142.90" fill="none" stroke="#21a121" stroke-width="1.4"/>
<line x1="413" x2="421.5" y1="157.22" y2="157.22" stroke="#dddbd6" stroke-width="1"/>
<line x1="413" x2="421.5" y1="169.54" y2="169.54" stroke="#dddbd6" stroke-width="1"/>
<line x1="402" x2="406.5" y1="181.86" y2="181.86" stroke="#dddbd6" stroke-width="1"/>
<rect x="395.30" y="178.86" width="6.00" height="6.00" rx="0.7" fill="#fbfbf9" stroke="#7f9db9" stroke-width="1"/>
<line x1="396.10" x2="400.50" y1="181.86" y2="181.86" stroke="#111" stroke-width="1.1"/>
<line y1="179.66" y2="184.06" x1="398.30" x2="398.30" stroke="#111" stroke-width="1.1"/>
<line x1="402" x2="406.5" y1="194.18" y2="194.18" stroke="#dddbd6" stroke-width="1"/>
<rect x="395.30" y="191.18" width="6.00" height="6.00" rx="0.7" fill="#fbfbf9" stroke="#7f9db9" stroke-width="1"/>
<line x1="396.10" x2="400.50" y1="194.18" y2="194.18" stroke="#111" stroke-width="1.1"/>
<line y1="191.98" y2="196.38" x1="398.30" x2="398.30" stroke="#111" stroke-width="1.1"/>
<line x1="402" x2="406.5" y1="206.50" y2="206.50" stroke="#dddbd6" stroke-width="1"/>
<rect x="395.30" y="203.50" width="6.00" height="6.00" rx="0.7" fill="#fbfbf9" stroke="#7f9db9" stroke-width="1"/>
<line x1="396.10" x2="400.50" y1="206.50" y2="206.50" stroke="#111" stroke-width="1.1"/>
<line y1="204.30" y2="208.70" x1="398.30" x2="398.30" stroke="#111" stroke-width="1.1"/>
<line x1="402" x2="406.5" y1="218.82" y2="218.82" stroke="#dddbd6" stroke-width="1"/>
<rect x="395.30" y="215.82" width="6.00" height="6.00" rx="0.7" fill="#fbfbf9" stroke="#7f9db9" stroke-width="1"/>
<line x1="396.10" x2="400.50" y1="218.82" y2="218.82" stroke="#111" stroke-width="1.1"/>
<line y1="216.62" y2="221.02" x1="398.30" x2="398.30" stroke="#111" stroke-width="1.1"/>
<line x1="402" x2="406.5" y1="231.14" y2="231.14" stroke="#dddbd6" stroke-width="1"/>
<rect x="395.30" y="228.14" width="6.00" height="6.00" rx="0.7" fill="#fbfbf9" stroke="#7f9db9" stroke-width="1"/>
<line x1="396.10" x2="400.50" y1="231.14" y2="231.14" stroke="#111" stroke-width="1.1"/>
<line y1="228.94" y2="233.34" x1="398.30" x2="398.30" stroke="#111" stroke-width="1.1"/>
<line x1="402" x2="406.5" y1="243.46" y2="243.46" stroke="#dddbd6" stroke-width="1"/>
<rect x="395.30" y="240.46" width="6.00" height="6.00" rx="0.7" fill="#fbfbf9" stroke="#7f9db9" stroke-width="1"/>
<line x1="396.10" x2="400.50" y1="243.46" y2="243.46" stroke="#111" stroke-width="1.1"/>
<line y1="241.26" y2="245.66" x1="398.30" x2="398.30" stroke="#111" stroke-width="1.1"/>
<line x1="402" x2="406.5" y1="255.78" y2="255.78" stroke="#dddbd6" stroke-width="1"/>
<rect x="395.30" y="252.78" width="6.00" height="6.00" rx="0.7" fill="#fbfbf9" stroke="#7f9db9" stroke-width="1"/>
<line x1="396.10" x2="400.50" y1="255.78" y2="255.78" stroke="#111" stroke-width="1.1"/>
<line y1="253.58" y2="257.98" x1="398.30" x2="398.30" stroke="#111" stroke-width="1.1"/>
<line x1="402" x2="406.5" y1="268.10" y2="268.10" stroke="#dddbd6" stroke-width="1"/>
<rect x="395.30" y="265.10" width="6.00" height="6.00" rx="0.7" fill="#fbfbf9" stroke="#7f9db9" stroke-width="1"/>
<line x1="396.10" x2="400.50" y1="268.10" y2="268.10" stroke="#111" stroke-width="1.1"/>
<line y1="265.90" y2="270.30" x1="398.30" x2="398.30" stroke="#111" stroke-width="1.1"/>
<line x1="402" x2="406.5" y1="280.42" y2="280.42" stroke="#dddbd6" stroke-width="1"/>
<rect x="395.30" y="277.42" width="6.00" height="6.00" rx="0.7" fill="#fbfbf9" stroke="#7f9db9" stroke-width="1"/>
<line x1="396.10" x2="400.50" y1="280.42" y2="280.42" stroke="#111" stroke-width="1.1"/>
<line y1="278.22" y2="282.62" x1="398.30" x2="398.30" stroke="#111" stroke-width="1.1"/>
<line x1="402" x2="406.5" y1="292.74" y2="292.74" stroke="#dddbd6" stroke-width="1"/>
<rect x="395.30" y="289.74" width="6.00" height="6.00" rx="0.7" fill="#fbfbf9" stroke="#7f9db9" stroke-width="1"/>
<line x1="396.10" x2="400.50" y1="292.74" y2="292.74" stroke="#111" stroke-width="1.1"/>
<line y1="290.54" y2="294.94" x1="398.30" x2="398.30" stroke="#111" stroke-width="1.1"/>
<line x1="402" x2="406.5" y1="305.06" y2="305.06" stroke="#dddbd6" stroke-width="1"/>
<rect x="395.30" y="302.06" width="6.00" height="6.00" rx="0.7" fill="#fbfbf9" stroke="#7f9db9" stroke-width="1"/>
<line x1="396.10" x2="400.50" y1="305.06" y2="305.06" stroke="#111" stroke-width="1.1"/>
<line y1="302.86" y2="307.26" x1="398.30" x2="398.30" stroke="#111" stroke-width="1.1"/>
<line x1="402" x2="406.5" y1="317.38" y2="317.38" stroke="#dddbd6" stroke-width="1"/>
<rect x="395.30" y="314.38" width="6.00" height="6.00" rx="0.7" fill="#fbfbf9" stroke="#7f9db9" stroke-width="1"/>
<line x1="396.10" x2="400.50" y1="317.38" y2="317.38" stroke="#111" stroke-width="1.1"/>
<line y1="315.18" y2="319.58" x1="398.30" x2="398.30" stroke="#111" stroke-width="1.1"/>
<line x1="402" x2="406.5" y1="329.70" y2="329.70" stroke="#dddbd6" stroke-width="1"/>
<rect x="395.30" y="326.70" width="6.00" height="6.00" rx="0.7" fill="#fbfbf9" stroke="#7f9db9" stroke-width="1"/>
<line x1="396.10" x2="400.50" y1="329.70" y2="329.70" stroke="#111" stroke-width="1.1"/>
<line y1="327.50" y2="331.90" x1="398.30" x2="398.30" stroke="#111" stroke-width="1.1"/>
<line x1="402" x2="406.5" y1="342.02" y2="342.02" stroke="#dddbd6" stroke-width="1"/>
<rect x="395.30" y="339.02" width="6.00" height="6.00" rx="0.7" fill="#fbfbf9" stroke="#7f9db9" stroke-width="1"/>
<line x1="396.10" x2="400.50" y1="342.02" y2="342.02" stroke="#111" stroke-width="1.1"/>
<line y1="339.82" y2="344.22" x1="398.30" x2="398.30" stroke="#111" stroke-width="1.1"/>
<rect x="418.4" y="139.3" width="75.6" height="10.4" rx="5.2" ry="5.2" fill="none" stroke="#f00808" stroke-width="1.5"/>
<rect x="580" y="74.8" width="33.5" height="14.3" rx="5" ry="5" fill="none" stroke="#f00808" stroke-width="1.6"/>
</svg>
</body></html>
